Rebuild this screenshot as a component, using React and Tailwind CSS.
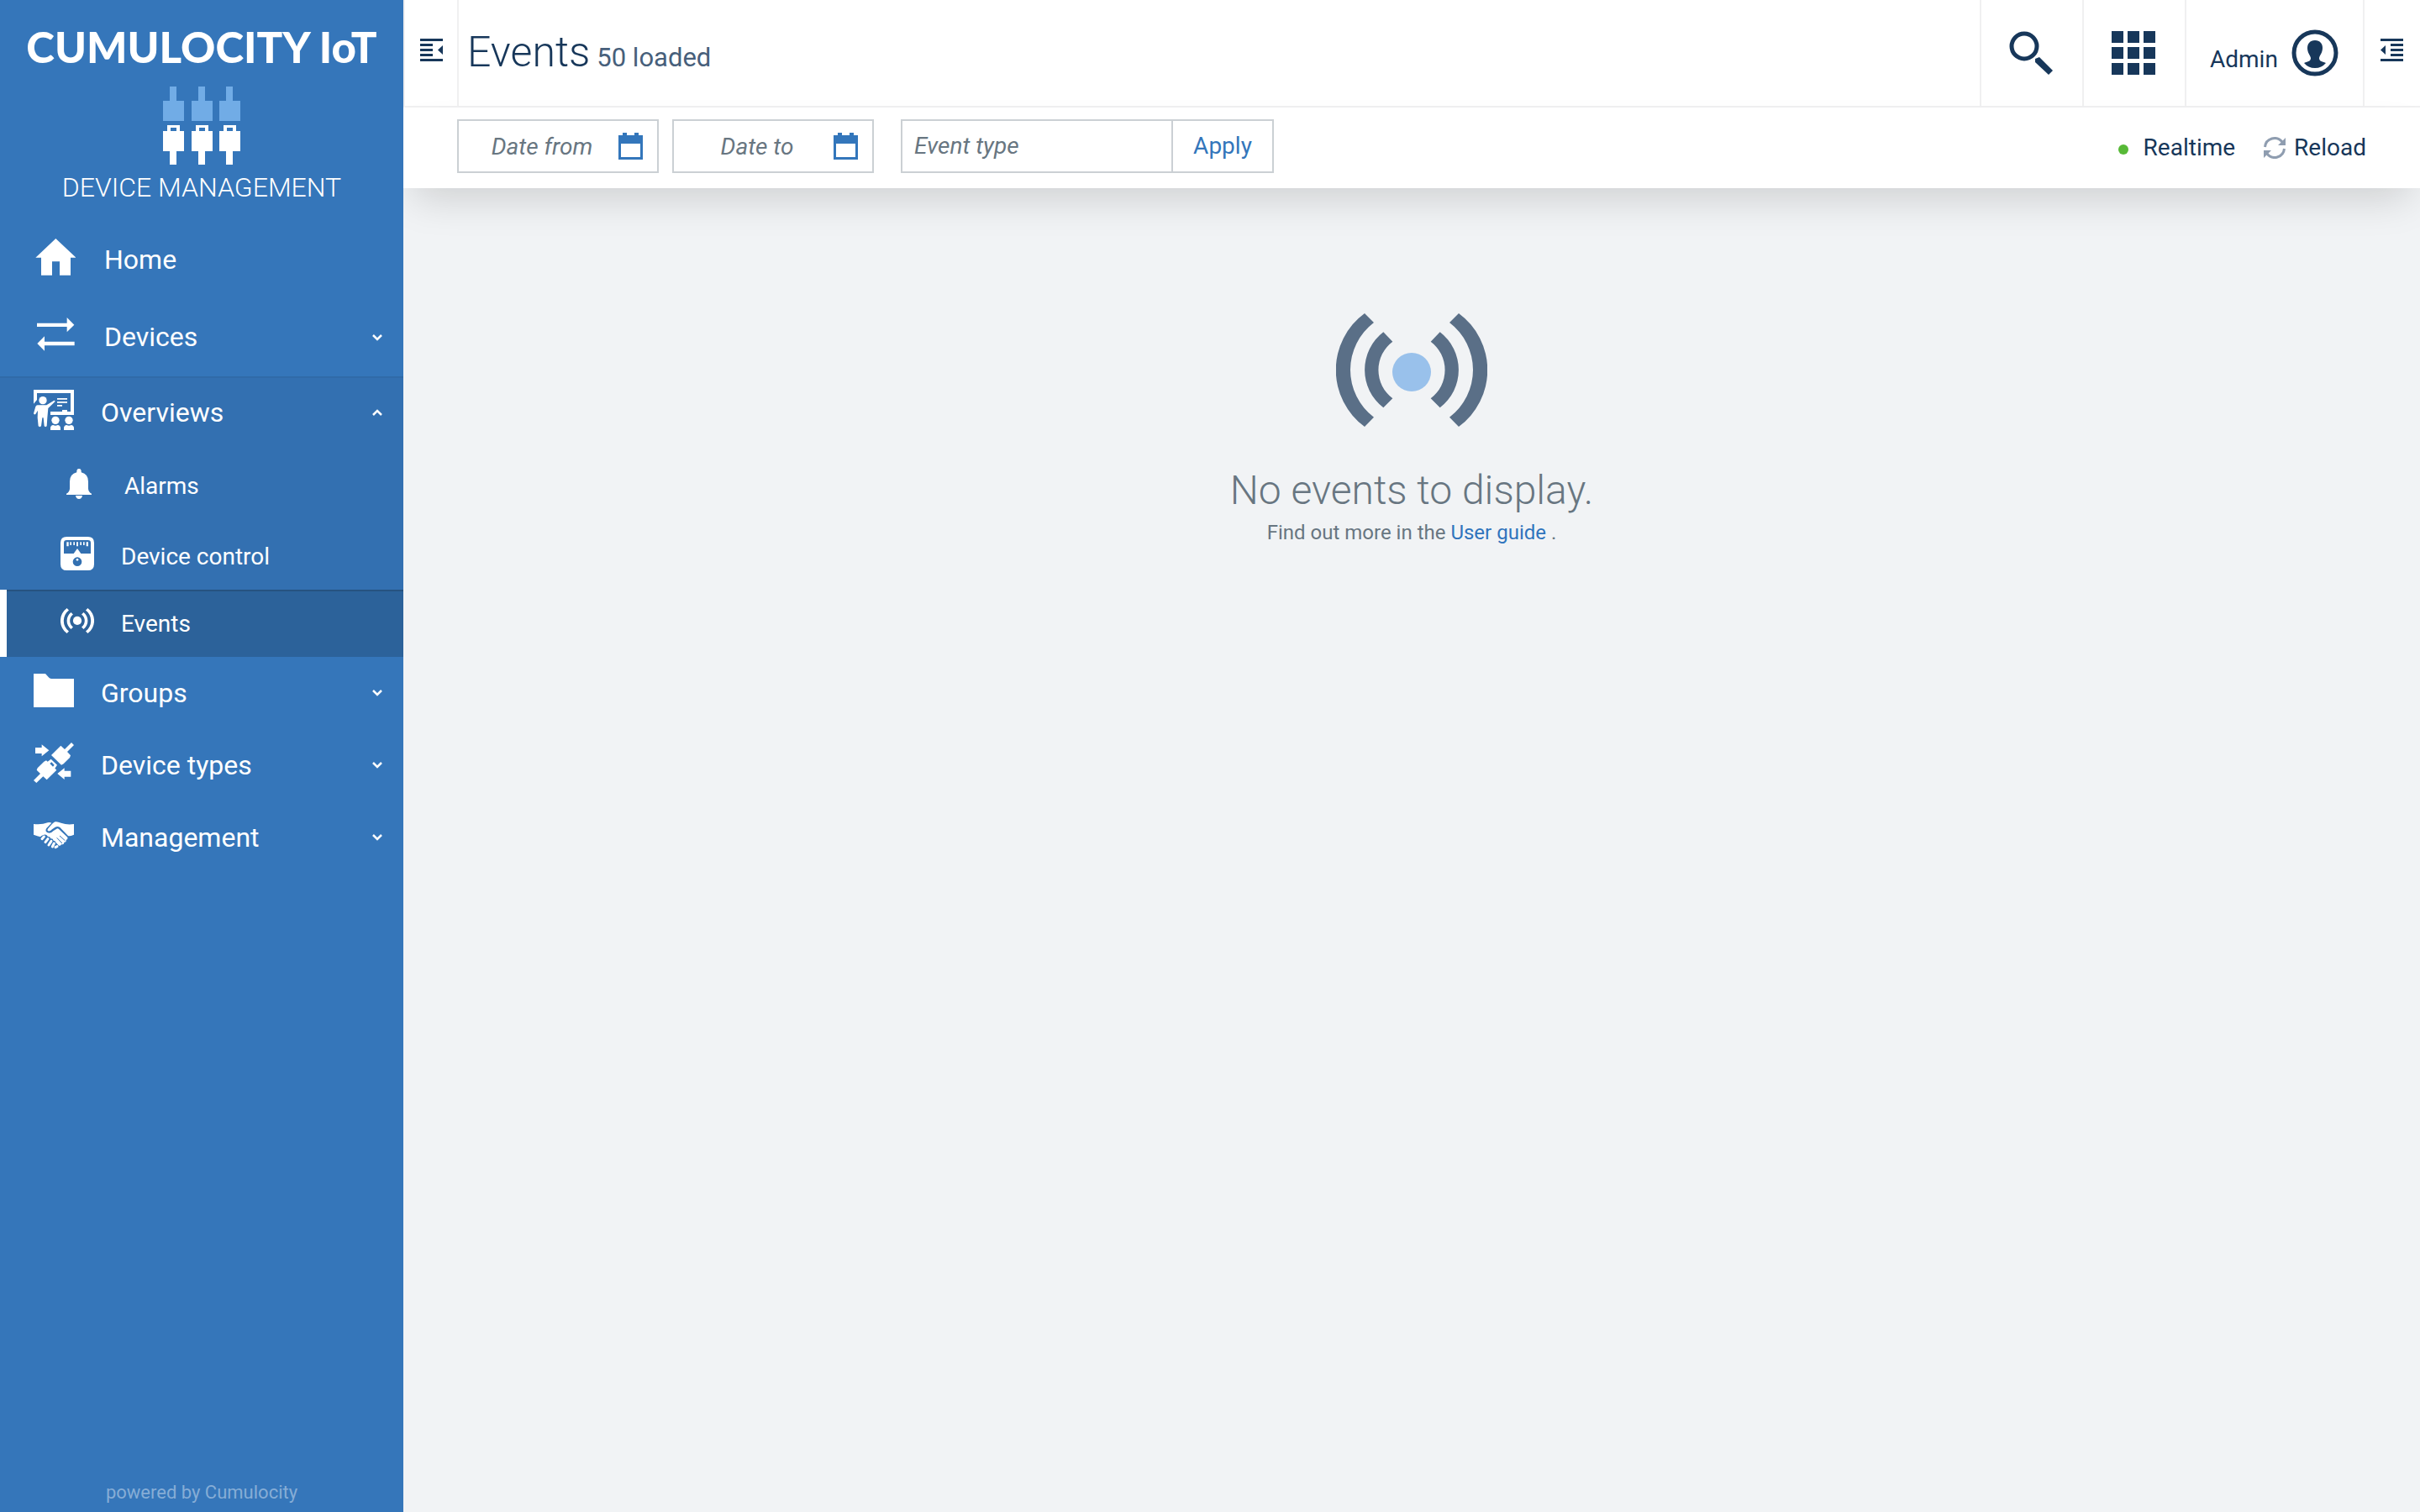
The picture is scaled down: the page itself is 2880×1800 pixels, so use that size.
const ROBOTO = "font-['Roboto',sans-serif]";

function HomeIcon() {
  return (
    <svg viewBox="126 66 144 168" className="h-14 w-12 shrink-0" fill="currentColor" aria-hidden="true">
      <path d="M199 72 L271 140 H252 V203 H213 V154 H186 V203 H147 V140 H127 Z" />
    </svg>
  );
}

function DevicesIcon() {
  return (
    <svg viewBox="126 342 144 168" className="h-14 w-12 shrink-0" fill="currentColor" aria-hidden="true">
      <path d="M132 374 H239 V354 L265 380 L239 406 V387 H132 Z" />
      <path d="M266 454 H159 V473 L133 447 L159 421 V440 H266 Z" />
    </svg>
  );
}

function OverviewsIcon() {
  return (
    <svg viewBox="120 609 144 168" className="h-14 w-12 shrink-0" fill="currentColor" aria-hidden="true">
      <path d="M120 612 H264 V702 H180 V690 H222 V684 H240 V690 H252 V624 H132 V648 L120 662 Z" />
      <path d="M204 642 H240 V647 H204 Z M204 654 H240 V659 H204 Z M204 666 H222 V671 H204 Z" />
      <circle cx="153" cy="650" r="14" />
      <path d="M134 667 H166 L192 651 Q198 649 196 655 L172 678 L169 712 L167 742 Q162 747 158 742 L155 712 H151 L147 742 Q142 747 137 742 L134 712 L135 686 L127 699 Q122 702 120 697 L127 672 Q129 667 134 667 Z" />
      <circle cx="198" cy="721" r="14" />
      <circle cx="246" cy="721" r="14" />
      <path d="M180 756 V748 Q181 739 190 738 Q198 742 206 738 Q215 739 216 748 V756 Z M228 756 V748 Q229 739 238 738 Q246 742 254 738 Q263 739 264 748 V756 Z" />
    </svg>
  );
}

function AlarmsIcon() {
  return (
    <svg viewBox="222 102 120 144" className="h-12 w-10 shrink-0" fill="currentColor" aria-hidden="true">
      <path d="M274 127 V121 Q275 114 282 114 Q289 114 290 121 V127 Q315 133 315 160 V185 Q316 197 327 203 V207 H237 V203 Q248 197 249 185 V160 Q249 133 274 127 Z" />
      <path d="M270 210 H294 Q292 222 282 222 Q272 222 270 210 Z" />
    </svg>
  );
}

function DeviceControlIcon() {
  return (
    <svg viewBox="216 354 120 144" className="h-12 w-10 shrink-0" fill="currentColor" fillRule="evenodd" aria-hidden="true">
      <path d="M238 357 H314 Q336 357 336 379 V455 Q336 477 314 477 H238 Q216 477 216 455 V379 Q216 357 238 357 Z M238 369 Q228 369 228 379 V417 H263 L276 399 L289 417 H324 V379 Q324 369 314 369 Z M276 430 A16 16 0 1 0 276 462 A16 16 0 1 0 276 430 Z" />
      <path d="M238 376 H245 V391 H238 Z M250 376 H255 V387 H250 Z M262 376 H267 V387 H262 Z M273 376 H279 V391 H273 Z M286 376 H291 V387 H286 Z M297 376 H302 V387 H297 Z M308 376 H315 V391 H308 Z" />
      <circle cx="276" cy="439" r="4" />
    </svg>
  );
}

function Waves() {
  return (
    <>
      <path d="M552 98 A251 251 0 0 0 552 503 L585 469 A212 212 0 0 1 585 131 Z" />
      <path d="M619 165 A170 170 0 0 0 619 435 L652 402 A127 127 0 0 1 652 199 Z" />
      <path d="M888 98 A251 251 0 0 1 888 503 L855 469 A212 212 0 0 0 855 131 Z" />
      <path d="M821 165 A170 170 0 0 1 821 435 L788 402 A127 127 0 0 0 788 199 Z" />
    </>
  );
}

function EventsIcon() {
  return (
    <svg viewBox="450 17 540 648" className="h-12 w-10 shrink-0" fill="currentColor" aria-hidden="true">
      <Waves />
      <circle cx="720" cy="300" r="69" />
    </svg>
  );
}

function GroupsIcon() {
  return (
    <svg viewBox="120 51 144 168" className="h-14 w-12 shrink-0" fill="currentColor" aria-hidden="true">
      <path d="M120 66 H162 L175 80 Q179 84 185 84 H264 V186 H120 Z" />
    </svg>
  );
}

function DeviceTypesIcon() {
  return (
    <svg viewBox="120 309 144 168" className="h-14 w-12 shrink-0" fill="currentColor" fillRule="evenodd" aria-hidden="true">
      <path d="M126 330 H149 V319 L175 340 L149 361 V351 H126 Z" />
      <path d="M253 413 H230 V403 L205 423 L230 444 V434 H253 Z" />
      <path d="M183 357 L217 323 L231 336 L255 312 L264 321 L240 345 L252 358 L249 366 L227 388 L219 392 Z" />
      <path d="M120 447 L144 423 L131 410 L134 403 L157 380 L165 376 L170 380 L182 371 L204 392 L196 404 L202 410 L167 445 L154 433 L130 456 Z M178 387 L184 382 L194 392 L189 398 Z" />
    </svg>
  );
}

function ManagementIcon() {
  return (
    <svg viewBox="120 567 144 168" className="h-14 w-12 shrink-0" fill="currentColor" aria-hidden="true">
      <path d="M120 603 Q150 606 170 598 Q178 596 184 599 L166 618 Q159 629 170 634 Q182 638 190 628 L202 620 Q206 617 210 621 L241 650 Q243 658 236 659 Q238 668 229 668 Q229 677 219 676 Q216 682 210 680 L199 668 Q198 662 191 662 Q189 654 181 655 Q179 647 171 648 Q165 638 155 642 Q147 644 144 649 Q134 646 120 641 Z" />
      <path d="M264 603 Q240 607 218 599 Q204 593 197 595 Q190 597 172 619 Q167 625 172 628 Q180 630 186 622 L197 614 Q206 609 214 615 L243 645 Q248 648 264 641 Z" />
      <g fill="none" stroke="currentColor" strokeWidth="9" strokeLinecap="round">
        <path d="M150 656 L157 648 M162 668 L171 656 M174 678 L183 664 M187 684 L193 672" />
        <path d="M198 686 L204 683" />
      </g>
      <path d="M203 652 L222 672 M213 645 L232 662" fill="none" stroke="#3576ba" strokeWidth="3" />
    </svg>
  );
}

function Chevron({ up }) {
  return (
    <svg viewBox="0 0 14 10" className="mr-6 ml-auto h-[10px] w-[14px] shrink-0" fill="none" stroke="currentColor" strokeWidth="2.5" aria-hidden="true">
      <path d={up ? "M2 8 L7 3 L12 8" : "M2 2 L7 7 L12 2"} />
    </svg>
  );
}

function PlugLogo() {
  return (
    <svg viewBox="0 0 92 93" className="h-[93px] w-[92px]" aria-hidden="true">
      {[0, 34, 67].map((x) => (
        <g key={x} transform={`translate(${x} 0)`}>
          <path d="M8 0 H16 V17 H25 V41 H0 V17 H8 Z" fill="#71ace6" />
          <path d="M5 46 H20 V53 H25 V77 H16 V93 H8 V77 H0 V53 H5 Z M9 49 V53 H16 V49 Z" fill="#fff" fillRule="evenodd" />
        </g>
      ))}
    </svg>
  );
}

function NavItem({ icon, label, tall, chevron }) {
  return (
    <a
      href="#"
      className={
        tall
          ? "flex h-[92px] items-center gap-[34px] pl-[42px] text-[32px]"
          : "flex h-[86px] items-center gap-8 pl-10 text-[32px]"
      }
    >
      {icon}
      <span className={tall ? "pb-[2px]" : ""}>{label}</span>
      {chevron && <Chevron up={chevron === "up"} />}
    </a>
  );
}

function DrawerIcon({ path }) {
  return (
    <svg viewBox="0 0 27 27" className="h-[27px] w-[27px]" fill="currentColor" aria-hidden="true">
      <path d={path} />
    </svg>
  );
}

const COLLAPSE_LEFT = "M0 0 H27 V3 H0 Z M0 6 H15 V9 H0 Z M0 12 H15 V15 H0 Z M0 18 H15 V21 H0 Z M0 24 H27 V27 H0 Z M27 8 V19 L21 13.5 Z";
const EXPAND_RIGHT = "M0 0 H27 V3 H0 Z M12 6 H27 V9 H12 Z M12 12 H27 V15 H12 Z M12 18 H27 V21 H12 Z M0 24 H27 V27 H0 Z M6 8 V19 L0 13.5 Z";

function CalendarIcon() {
  return (
    <svg viewBox="0 0 29 32" className="h-8 w-[29px]" fill="#3376bb" fillRule="evenodd" aria-hidden="true">
      <path d="M0 3 H5 V0 H10 V3 H19 V0 H24 V3 H29 V32 H0 Z M3 13 V29 H26 V13 Z" />
    </svg>
  );
}

function DateField({ label }) {
  return (
    <div className="flex h-16 w-60 items-center border-2 border-[#cbd0d4] bg-white">
      <input
        aria-label={label}
        placeholder={label}
        className="h-full w-0 grow px-1 text-center text-[28px] outline-none placeholder:text-[#687681] placeholder:italic placeholder:opacity-100"
      />
      <button aria-label={`Open calendar, ${label}`} className="mr-[17px] -ml-2">
        <CalendarIcon />
      </button>
    </div>
  );
}

function Sidebar() {
  return (
    <aside className="flex w-[480px] shrink-0 flex-col bg-[#3576ba] text-white">
      <div className="flex flex-col items-center pt-[26px]">
        <div className="font-['Lato',sans-serif] text-[51px] leading-[60px] font-black whitespace-nowrap">CUMULOCITY IoT</div>
        <div className="mt-[17px]">
          <PlugLogo />
        </div>
        <div className="mt-[7px] text-[32px] leading-10 font-light whitespace-nowrap">DEVICE MANAGEMENT</div>
      </div>
      <nav className="mt-[21px]">
        <NavItem tall icon={<HomeIcon />} label="Home" />
        <NavItem tall icon={<DevicesIcon />} label="Devices" chevron="down" />
        <div className="bg-[#3370b1] shadow-[inset_0_2px_0_#306aa8]">
          <NavItem icon={<OverviewsIcon />} label="Overviews" chevron="up" />
          <a href="#" className="flex h-[88px] items-center gap-[34px] pl-[74px] text-[28px]">
            <AlarmsIcon />
            <span className="pt-[2px]">Alarms</span>
          </a>
          <a href="#" className="flex h-20 items-center gap-8 pl-[72px] text-[28px]">
            <DeviceControlIcon />
            <span className="pt-[2px]">Device control</span>
          </a>
          <a
            href="#"
            aria-current="page"
            className="flex h-20 items-center gap-8 border-l-8 border-white bg-[#2c629a] pl-16 text-[28px] shadow-[inset_0_2px_0_#265380]"
          >
            <EventsIcon />
            <span className="pt-[2px]">Events</span>
          </a>
        </div>
        <NavItem icon={<GroupsIcon />} label="Groups" chevron="down" />
        <NavItem icon={<DeviceTypesIcon />} label="Device types" chevron="down" />
        <NavItem icon={<ManagementIcon />} label="Management" chevron="down" />
      </nav>
      <footer className="mt-auto pb-[7px] text-center text-[22px] leading-8 text-[#86add6]">powered by Cumulocity</footer>
    </aside>
  );
}

function TopBar() {
  return (
    <header className="flex h-32 border-b-2 border-[#f0f0f1] bg-white text-[#17375a]">
      <button aria-label="Toggle navigation" className="flex w-[66px] items-start border-x-2 border-[#f0f0f1] pt-[46px] pl-[18px]">
        <DrawerIcon path={COLLAPSE_LEFT} />
      </button>
      <h1 className="flex grow items-baseline gap-2 pl-[10px] text-[50px] leading-[124px] font-light">
        Events <small className="text-[31px] font-normal text-[#475f7b]">50 loaded</small>
      </h1>
      <button aria-label="Search" className="w-[122px] border-l-2 border-[#f0f0f1] pl-[33px]">
        <svg viewBox="0 0 52 52" className="h-[52px] w-[52px]" aria-hidden="true">
          <circle cx="18" cy="18" r="15" fill="none" stroke="currentColor" strokeWidth="5" />
          <path d="M31 33 L36 31 L52 47 L47 52 L31 37 Z" fill="currentColor" />
        </svg>
      </button>
      <button aria-label="Applications" className="w-[122px] border-l-2 border-[#f0f0f1] pl-[33px]">
        <svg viewBox="0 0 52 52" className="h-[52px] w-[52px]" fill="currentColor" aria-hidden="true">
          {[0, 19, 38].map((y) => [0, 19, 38].map((x) => <rect key={`${x}-${y}`} x={x} y={y} width="14" height="14" />))}
        </svg>
      </button>
      <button className="flex w-[212px] items-center gap-4 border-l-2 border-[#f0f0f1] pl-7 text-[28px]">
        <span className="pt-4">Admin</span>
        <svg viewBox="0 0 56 56" className="h-14 w-14" aria-hidden="true">
          <circle cx="28" cy="28" r="25" fill="none" stroke="currentColor" strokeWidth="5" />
          <path d="M28 13 C34 13 37 17 37 22 C37 28 34 30 33 34 C33 38 36 38 41 40 Q36 46 28 46 Q20 46 15 40 C20 38 23 38 23 34 C22 30 19 28 19 22 C19 17 22 13 28 13 Z" fill="currentColor" />
        </svg>
      </button>
      <button aria-label="Toggle right drawer" className="flex w-[68px] items-start border-l-2 border-[#f0f0f1] pt-[46px] pl-[19px]">
        <DrawerIcon path={EXPAND_RIGHT} />
      </button>
    </header>
  );
}

function Toolbar() {
  return (
    <div className="relative flex h-24 items-center bg-white pr-16 pl-16 text-[28px] text-[#17375a] shadow-[0_24px_48px_-12px_rgba(0,0,0,0.15)]">
      <div className="flex pb-1">
        <DateField label="Date from" />
        <div className="ml-4">
          <DateField label="Date to" />
        </div>
        <div className="ml-8 flex h-16 border-2 border-[#cbd0d4]">
          <input
            aria-label="Event type"
            placeholder="Event type"
            className="w-80 pl-[14px] outline-none placeholder:text-[#687681] placeholder:italic placeholder:opacity-100"
          />
          <button className="w-[120px] border-l-2 border-[#cbd0d4] text-[#3376bb]">Apply</button>
        </div>
      </div>
      <button className="ml-auto flex items-center gap-[18px]">
        <span className="mt-1 h-3 w-3 rounded-full bg-[#57b937]" />
        Realtime
      </button>
      <button className="ml-[34px] flex items-center gap-[10px]">
        <svg viewBox="0 0 26 26" className="h-[26px] w-[26px]" aria-hidden="true">
          <path d="M1.5 12 A11.5 11.5 0 0 1 22 6 M24.5 14 A11.5 11.5 0 0 1 4 20" fill="none" stroke="#8f9db0" strokeWidth="3" />
          <path d="M26 1 V10 H17 Z M0 25 V16 H9 Z" fill="#8f9db0" />
        </svg>
        Reload
      </button>
    </div>
  );
}

export default function App() {
  return (
    <div className={`flex min-h-screen w-full ${ROBOTO}`}>
      <Sidebar />
      <div className="flex min-w-0 grow flex-col overflow-hidden bg-[#f1f3f5]">
        <TopBar />
        <Toolbar />
        <main className="flex flex-col items-center pt-[149px] text-[#687681]">
          <svg viewBox="450 98 540 405" className="h-[135px] w-[180px]" fill="#5a6f87" aria-hidden="true">
            <Waves />
            <circle cx="720" cy="308" r="69" fill="#99c1eb" />
          </svg>
          <h2 className="mt-[44px] text-[48px] leading-[64px] font-light">No events to display.</h2>
          <p className="text-[24px] leading-9">
            Find out more in the{" "}
            <a href="#" className="text-[#2f74bd]">
              User guide
            </a>{" "}
            .
          </p>
        </main>
      </div>
    </div>
  );
}
